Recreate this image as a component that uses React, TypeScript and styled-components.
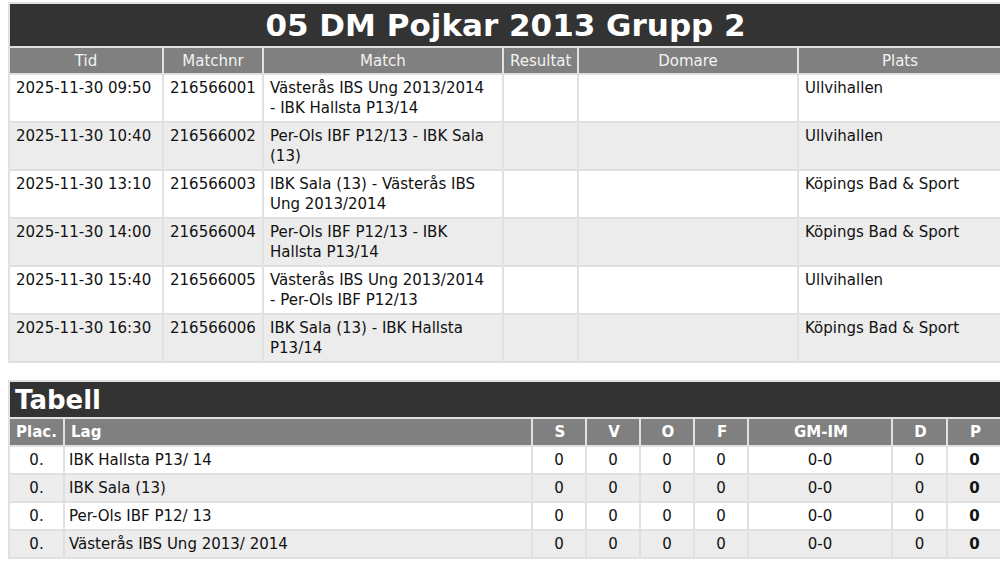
import React from "react";
import styled, { createGlobalStyle } from "styled-components";

const matches = [
  { tid: "2025-11-30 09:50", nr: "216566001", match: "Västerås IBS Ung 2013/2014 - IBK Hallsta P13/14", plats: "Ullvihallen" },
  { tid: "2025-11-30 10:40", nr: "216566002", match: "Per-Ols IBF P12/13 - IBK Sala (13)", plats: "Ullvihallen" },
  { tid: "2025-11-30 13:10", nr: "216566003", match: "IBK Sala (13) - Västerås IBS Ung 2013/2014", plats: "Köpings Bad & Sport" },
  { tid: "2025-11-30 14:00", nr: "216566004", match: "Per-Ols IBF P12/13 - IBK Hallsta P13/14", plats: "Köpings Bad & Sport" },
  { tid: "2025-11-30 15:40", nr: "216566005", match: "Västerås IBS Ung 2013/2014 - Per-Ols IBF P12/13", plats: "Ullvihallen" },
  { tid: "2025-11-30 16:30", nr: "216566006", match: "IBK Sala (13) - IBK Hallsta P13/14", plats: "Köpings Bad & Sport" },
];

const teams = ["IBK Hallsta P13/ 14", "IBK Sala (13)", "Per-Ols IBF P12/ 13", "Västerås IBS Ung 2013/ 2014"];

const matchCols = [154, 100, 240, 75, 220, 203];
const tableCols = [55, 468, 54, 54, 54, 54, 144, 55, 54];

const App = () => {
  return (
    <>
      <GlobalStyle />
      <Page>
        <Table>
          <colgroup>
            {matchCols.map((w, i) => (
              <col key={i} style={{ width: w }} />
            ))}
          </colgroup>
          <thead>
            <tr>
              <TitleCell colSpan={6}>05 DM Pojkar 2013 Grupp 2</TitleCell>
            </tr>
            <tr>
              <HeadCell>Tid</HeadCell>
              <HeadCell>Matchnr</HeadCell>
              <HeadCell>Match</HeadCell>
              <HeadCell>Resultat</HeadCell>
              <HeadCell>Domare</HeadCell>
              <HeadCell>Plats</HeadCell>
            </tr>
          </thead>
          <tbody>
            {matches.map((m) => (
              <Row key={m.nr}>
                <MatchCell>{m.tid}</MatchCell>
                <MatchCell>{m.nr}</MatchCell>
                <MatchCell>{m.match}</MatchCell>
                <MatchCell />
                <MatchCell />
                <MatchCell>{m.plats}</MatchCell>
              </Row>
            ))}
          </tbody>
        </Table>

        <Table>
          <colgroup>
            {tableCols.map((w, i) => (
              <col key={i} style={{ width: w }} />
            ))}
          </colgroup>
          <thead>
            <tr>
              <SectionCell colSpan={9}>Tabell</SectionCell>
            </tr>
            <tr>
              <StandHead $align="left">Plac.</StandHead>
              <StandHead $align="left">Lag</StandHead>
              <StandHead>S</StandHead>
              <StandHead>V</StandHead>
              <StandHead>O</StandHead>
              <StandHead>F</StandHead>
              <StandHead>GM-IM</StandHead>
              <StandHead>D</StandHead>
              <StandHead>P</StandHead>
            </tr>
          </thead>
          <tbody>
            {teams.map((t) => (
              <Row key={t}>
                <StandCell>0.</StandCell>
                <StandCell $align="left">{t}</StandCell>
                <StandCell>0</StandCell>
                <StandCell>0</StandCell>
                <StandCell>0</StandCell>
                <StandCell>0</StandCell>
                <StandCell>0-0</StandCell>
                <StandCell>0</StandCell>
                <StandCell $bold>0</StandCell>
              </Row>
            ))}
          </tbody>
        </Table>
      </Page>
    </>
  );
};
export default App;

const GlobalStyle = createGlobalStyle`
  body {
    margin: 0;
    background: #fff;
    font-family: "DejaVu Sans", Verdana, sans-serif;
    color: #111;
    overflow: hidden;
  }
`;
const Page = styled.div`
  display: flex;
  flex-direction: column;
  gap: 17px;
  padding: 2px 0 0 8px;
`;
const Table = styled.table`
  width: 992px;
  table-layout: fixed;
  border-collapse: collapse;
  font-size: 15px;
`;
const TitleCell = styled.th`
  background: #333;
  color: #fff;
  font-size: 31px;
  font-weight: bold;
  height: 42px;
  padding: 0;
  text-align: center;
  border: 2px solid #e0e0e0;
  border-right: none;
`;
const SectionCell = styled.th`
  background: #333;
  color: #fff;
  font-size: 26px;
  font-weight: bold;
  height: 35px;
  padding: 0 5px;
  text-align: left;
  border: 2px solid #e0e0e0;
  border-right: none;
`;
const HeadCell = styled.th`
  background: #808080;
  color: #f2f2f2;
  font-weight: normal;
  height: 25px;
  padding: 0 6px;
  text-align: center;
  border: 2px solid #e0e0e0;
  &:last-child {
    border-right: none;
  }
`;
const StandHead = styled.th<{ $align?: string }>`
  background: #808080;
  color: #fff;
  font-weight: bold;
  height: 26px;
  padding: 0 4px 0 6px;
  text-align: ${(p) => p.$align || "center"};
  border: 2px solid #e0e0e0;
  &:last-child {
    border-right: none;
  }
`;
const Row = styled.tr`
  background: #fff;
  &:nth-child(even) {
    background: #ececec;
  }
`;
const MatchCell = styled.td`
  vertical-align: top;
  padding: 3px 9px 3px 6px;
  line-height: 20px;
  height: 40px;
  border: 2px solid #e0e0e0;
  &:last-child {
    border-right: none;
  }
`;
const StandCell = styled.td<{ $align?: string; $bold?: boolean }>`
  text-align: ${(p) => p.$align || "center"};
  font-weight: ${(p) => (p.$bold ? "bold" : "normal")};
  height: 26px;
  padding: 0 4px;
  border: 2px solid #e0e0e0;
  &:last-child {
    border-right: none;
  }
`;
